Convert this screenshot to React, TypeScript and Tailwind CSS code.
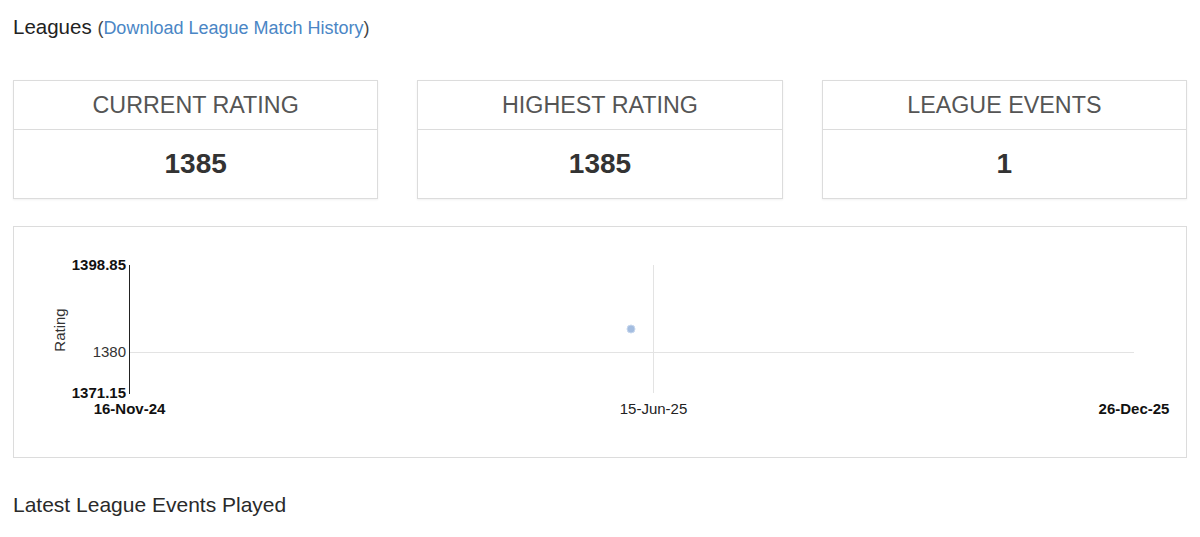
import React from 'react';

const STATS = [
    { id: 'current', label: 'CURRENT RATING', value: '1385' },
    { id: 'highest', label: 'HIGHEST RATING', value: '1385' },
    { id: 'events', label: 'LEAGUE EVENTS', value: '1' },
];

// chart coordinates are relative to the inner box (page x - 14, page y - 227)
const RatingChart: React.FC = () => (
    <svg width="1171" height="230" viewBox="0 0 1171 230" className="block">
        <g fontFamily="'Liberation Sans', Arial, sans-serif" fontSize="15" fill="#111">
            {/* grid */}
            <line x1="116" y1="125.5" x2="1120" y2="125.5" stroke="#e3e3e3" strokeWidth="1" />
            <line x1="639.5" y1="38" x2="639.5" y2="166" stroke="#e3e3e3" strokeWidth="1" />
            {/* y axis */}
            <line x1="115.5" y1="38" x2="115.5" y2="167" stroke="#222" strokeWidth="1" />
            <text x="112" y="43" textAnchor="end" fontWeight="bold">1398.85</text>
            <text x="112" y="130" textAnchor="end" fill="#333">1380</text>
            <text x="112" y="171" textAnchor="end" fontWeight="bold">1371.15</text>
            <text transform="translate(51 103) rotate(-90)" textAnchor="middle" fill="#333">Rating</text>
            {/* x labels */}
            <text x="115.5" y="187" textAnchor="middle" fontWeight="bold">16-Nov-24</text>
            <text x="639.5" y="187" textAnchor="middle" fill="#222">15-Jun-25</text>
            <text x="1120" y="187" textAnchor="middle" fontWeight="bold">26-Dec-25</text>
            {/* data point */}
            <circle cx="617" cy="102" r="4" fill="#a4bde0" stroke="#c8d8ee" strokeWidth="1" />
        </g>
    </svg>
);

export default function App() {
    return (
        <div className="w-[1200px] h-[537px] bg-white px-[13px] pt-[13px] text-[#333] font-['Liberation_Sans',Arial,sans-serif] overflow-hidden">
            {/* Heading */}
            <h2 className="text-[20.5px] leading-[28px] text-[#222]">
                Leagues{' '}
                <span className="text-[18px] text-[#444]">
                    (<a className="text-[#4a86c5]">Download League Match History</a>)
                </span>
            </h2>

            {/* Stat cards */}
            <div className="grid grid-cols-3 gap-[39px] mt-[38px]">
                {STATS.map((s) => (
                    <div key={s.id} className="border border-[#dcdcdc] shadow-[0_1px_2px_rgba(0,0,0,0.06)] bg-white">
                        <div className="h-[49px] flex items-center justify-center border-b border-[#dcdcdc] text-[23.3px] text-[#555]">
                            {s.label}
                        </div>
                        <div className="h-[68px] flex items-center justify-center text-[28px] font-bold text-[#333]">
                            {s.value}
                        </div>
                    </div>
                ))}
            </div>

            {/* Chart */}
            <div className="mt-[27px] h-[232px] border border-[#dcdcdc] bg-white">
                <RatingChart />
            </div>

            <h3 className="mt-[33px] text-[21px] leading-[28px] text-[#2a2a2a]">Latest League Events Played</h3>
        </div>
    );
}
